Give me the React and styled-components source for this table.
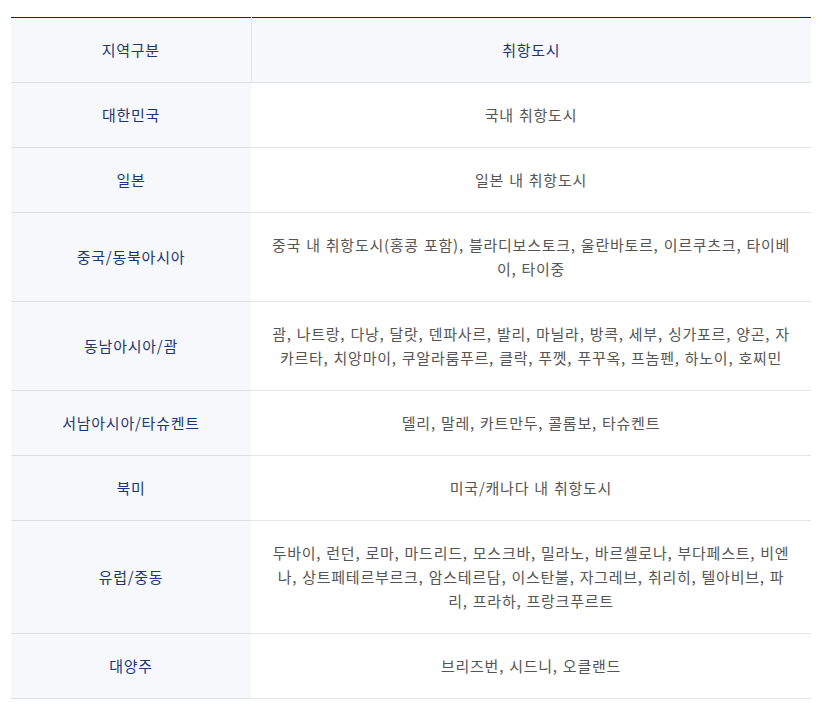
import React from "react";
import styled, { createGlobalStyle } from "styled-components";

const Global = createGlobalStyle`
  html, body { margin: 0; padding: 0; background: #fff; }
  body { font-family: "Noto Sans CJK KR", "Noto Sans", sans-serif; }
`;

const Wrap = styled.div`
  padding: 17px 19px 0 11px;
`;

const Table = styled.table`
  width: 800px;
  border-collapse: collapse;
  table-layout: fixed;
  border-top: 1px solid #0b2363;
  font-size: 15px;
  line-height: 24px;
  letter-spacing: 0.75px;
  word-spacing: 1px;
`;

const Th = styled.th`
  font-weight: 400;
  color: #1d3677;
  background: #f6f8fc;
  padding: 20px 20px;
  border-bottom: 1px solid #dcdfe4;
  text-align: center;
  ${(p) => (p.$divider ? "border-right: 1px solid #e2e4e8;" : "")}
`;

const Region = styled.td`
  color: #1d3677;
  background: #f6f8fc;
  padding: 20px 20px;
  border-bottom: 1px solid #dcdfe4;
  text-align: center;
  vertical-align: middle;
`;

const Cities = styled.td`
  color: #555;
  background: #fff;
  padding: 20px 20px;
  border-bottom: 1px solid #e3e5e8;
  text-align: center;
  vertical-align: middle;
  word-break: break-all;
`;

const rows = [
  ["대한민국", "국내 취항도시"],
  ["일본", "일본 내 취항도시"],
  ["중국/동북아시아", "중국 내 취항도시(홍콩 포함), 블라디보스토크, 울란바토르, 이르쿠츠크, 타이베이, 타이중"],
  ["동남아시아/괌", "괌, 나트랑, 다낭, 달랏, 덴파사르, 발리, 마닐라, 방콕, 세부, 싱가포르, 양곤, 자카르타, 치앙마이, 쿠알라룸푸르, 클락, 푸껫, 푸꾸옥, 프놈펜, 하노이, 호찌민"],
  ["서남아시아/타슈켄트", "델리, 말레, 카트만두, 콜롬보, 타슈켄트"],
  ["북미", "미국/캐나다 내 취항도시"],
  ["유럽/중동", "두바이, 런던, 로마, 마드리드, 모스크바, 밀라노, 바르셀로나, 부다페스트, 비엔나, 상트페테르부르크, 암스테르담, 이스탄불, 자그레브, 취리히, 텔아비브, 파리, 프라하, 프랑크푸르트"],
  ["대양주", "브리즈번, 시드니, 오클랜드"],
];

export default function App() {
  return (
    <>
      <Global />
      <Wrap>
        <Table>
          <colgroup>
            <col style={{ width: 240 }} />
            <col />
          </colgroup>
          <thead>
            <tr>
              <Th $divider>지역구분</Th>
              <Th>취항도시</Th>
            </tr>
          </thead>
          <tbody>
            {rows.map(([r, c]) => (
              <tr key={r}>
                <Region>{r}</Region>
                <Cities>{c}</Cities>
              </tr>
            ))}
          </tbody>
        </Table>
      </Wrap>
    </>
  );
}
